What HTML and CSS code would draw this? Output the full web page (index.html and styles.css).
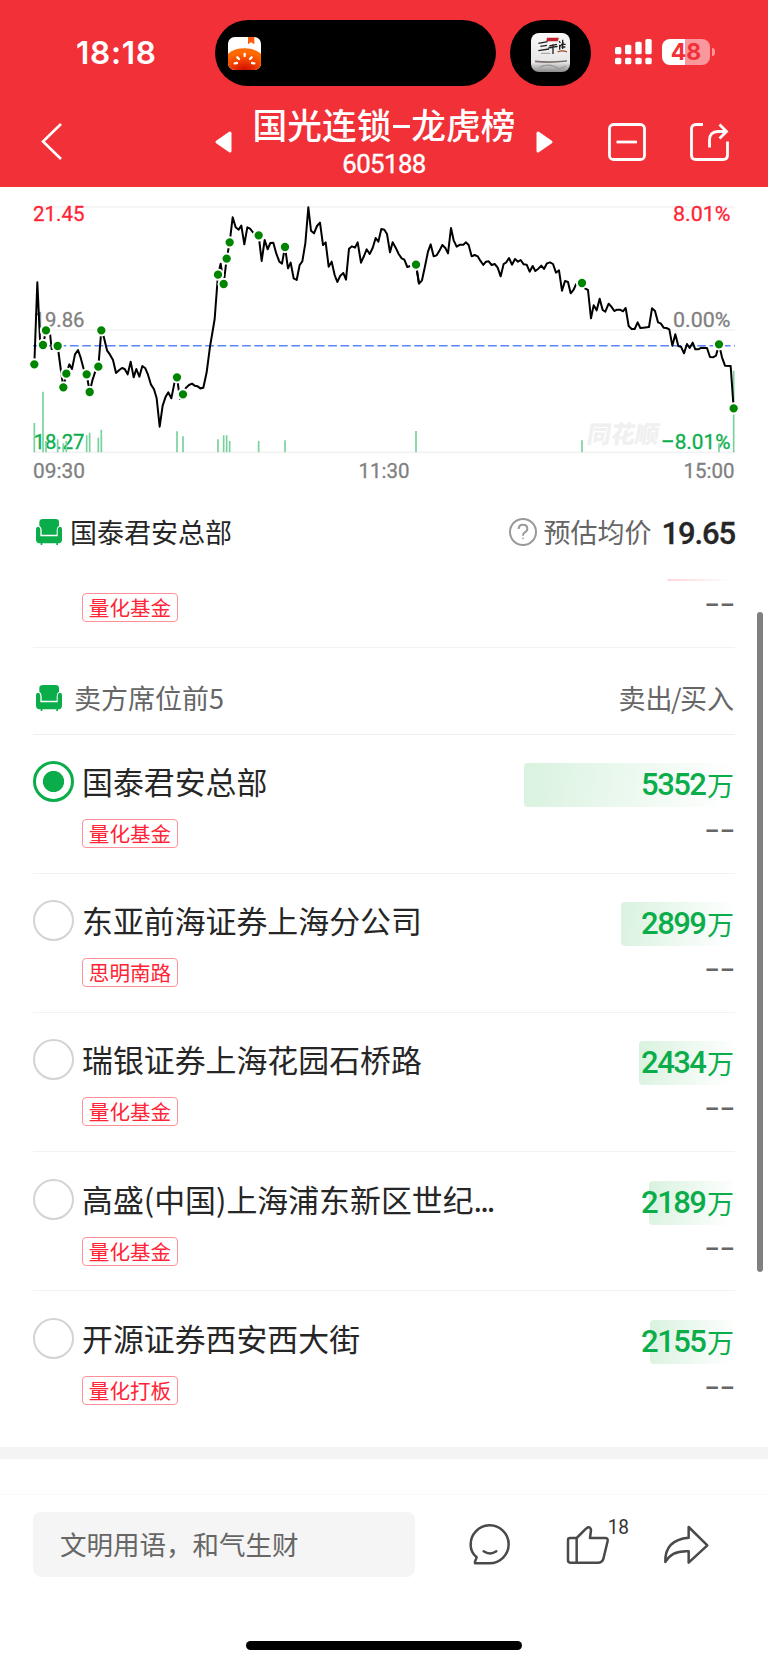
FILE: index.html
```html
<!DOCTYPE html>
<html lang="zh-CN">
<head>
<meta charset="utf-8">
<title>国光连锁-龙虎榜</title>
<link rel="stylesheet" href="styles.css">
</head>
<body>
<svg width="0" height="0" class="defs">
  <symbol id="sofa" viewBox="0 0 78 78">
    <path d="M10 20V10Q10 0 21 0H59Q69 0 69 10V20Q62 24 62 34V47H17V34Q17 24 10 20Z"/>
    <path d="M0 30Q0 23 7 23Q13 24 13 32V52H65V32Q65 24 71 23Q78 23 78 30V62Q78 73 66 73V78H61V73H19V78H14V73Q0 73 0 62Z"/>
  </symbol>
</svg>
<header class="header">
  <div class="status">
    <span class="clock">18:18</span>
    <div class="island">
      <svg class="app" width="33" height="33" viewBox="0 0 99 99">
        <defs><clipPath id="r1"><rect width="99" height="99" rx="20"/></clipPath>
        <radialGradient id="g1" cx=".5" cy="1" r=".8"><stop offset="0" stop-color="#cf0a00"/><stop offset=".5" stop-color="#ee3a00"/><stop offset="1" stop-color="#ff6a00"/></radialGradient></defs>
        <g clip-path="url(#r1)"><rect width="99" height="99" fill="#fff"/><path d="M60 0H79V22L69 16L60 22Z" fill="#ff5d0a"/>
        <path d="M0 50Q20 34 50 34T99 50V99H0Z" fill="url(#g1)"/>
        <g stroke="#fff" stroke-width="7" stroke-linecap="round"><path d="M50 51V57M28 61L33 66M71 61L66 66M20 79L27 78M79 79L72 78"/></g></g>
      </svg>
    </div>
    <div class="bubble">
      <svg width="39" height="39" viewBox="0 0 117 117">
        <defs><clipPath id="r2"><rect width="117" height="117" rx="24"/></clipPath>
        <linearGradient id="g2" x2="0" y2="1"><stop offset="0" stop-color="#fafafa"/><stop offset=".75" stop-color="#e6e6e6"/><stop offset="1" stop-color="#8b8b8b"/></linearGradient></defs>
        <g clip-path="url(#r2)"><rect width="117" height="117" fill="url(#g2)"/>
        <path d="M48 14H84L80 25H46Z" fill="#c3202c"/>
        <g stroke="#222" fill="none"><path d="M22 31L50 26M28 40L48 37M22 53L54 48M55 39L78 34M52 45L80 40M66 34V63M84 24L88 30M87 40L98 28M95 20V48M86 50V35M90 34H104M91 42H103" stroke-width="4"/><path d="M80 57Q94 50 108 57" stroke="#9a4a2b" stroke-width="4"/><path d="M30 61H58" stroke="#999" stroke-width="3"/><path d="M12 85Q55 90 108 84" stroke="#7b706b" stroke-width="5"/><path d="M26 103Q55 88 84 108L106 99" stroke="#999" stroke-width="4"/></g></g>
      </svg>
    </div>
    <svg class="signal" width="37" height="26" viewBox="0 0 111 78" fill="#fff">
      <rect x="0" y="24" width="19" height="22" rx="5"/><rect x="30" y="17" width="19" height="29" rx="5"/><rect x="61" y="8" width="19" height="38" rx="5"/><rect x="91" y="0" width="19" height="46" rx="5"/>
      <rect x="0" y="56" width="19" height="20" rx="5"/><rect x="30" y="56" width="19" height="20" rx="5"/><rect x="61" y="56" width="19" height="20" rx="5"/><rect x="91" y="56" width="19" height="20" rx="5"/>
    </svg>
    <div class="battery">48</div><i class="cap"></i>
  </div>
  <nav class="nav">
    <svg class="back" width="24" height="40" viewBox="0 0 24 40"><path d="M21 3L3 20.500L21 38" fill="none" stroke="#fff" stroke-width="2.600"/></svg>
    <svg class="prev" width="18" height="22" viewBox="0 0 18 22"><path d="M2 11L15 2V20Z" fill="#fff" stroke="#fff" stroke-width="3" stroke-linejoin="round"/></svg>
    <div class="title"><h1>国光连锁<i class="dash"></i>龙虎榜</h1><span>605188</span></div>
    <svg class="next" width="18" height="22" viewBox="0 0 18 22"><path d="M16 11L3 2V20Z" fill="#fff" stroke="#fff" stroke-width="3" stroke-linejoin="round"/></svg>
    <svg class="minus" width="38" height="38" viewBox="0 0 38 38" fill="none" stroke="#fff" stroke-width="2.800"><rect x="1.500" y="1.500" width="35" height="35" rx="4"/><path d="M8.500 19H29"/></svg>
    <svg class="export" width="39" height="38" viewBox="0 0 39 38" fill="none" stroke="#fff" stroke-width="2.800"><path d="M13 1.500H6Q1.500 1.500 1.500 6V32Q1.500 36.500 6 36.500H33Q37.500 36.500 37.500 32V18.500M19.500 24.500V17Q19.500 8.500 28 8.500H36M29.500 1.500L36.500 8.500L29.500 15.500"/></svg>
  </nav>
</header>

<main class="content">
<svg class="chart" width="768" height="305" viewBox="0 187 768 305">
  <g stroke="#f2f2f2" stroke-width="1.700"><path d="M33 207H735M33 330H735M33 452.300H735"/></g>
  <path d="M33 345.700H735" stroke="#5b86fb" stroke-width="1.600" stroke-dasharray="8.700 3.600"/>
  <text class="mark" transform="translate(586 443) skewX(-9)" textLength="72" lengthAdjust="spacingAndGlyphs">同花顺</text>
  <g class="lbl">
    <text class="red" x="33" y="220.700" textLength="51.500" lengthAdjust="spacingAndGlyphs">21.45</text>
    <text x="33.500" y="326.700" textLength="51" lengthAdjust="spacingAndGlyphs">19.86</text>
    <text class="green" x="33.500" y="449.300" textLength="51" lengthAdjust="spacingAndGlyphs">18.27</text>
    <text x="33" y="478.300" textLength="52" lengthAdjust="spacingAndGlyphs">09:30</text>
    <text x="358.500" y="478.300" textLength="51" lengthAdjust="spacingAndGlyphs">11:30</text>
    <text x="683.500" y="478.300" textLength="51" lengthAdjust="spacingAndGlyphs">15:00</text>
    <text class="red" x="673" y="220.700" textLength="57.500" lengthAdjust="spacingAndGlyphs">8.01%</text>
    <text x="673" y="326.700" textLength="57.500" lengthAdjust="spacingAndGlyphs">0.00%</text>
    <text class="green" x="661" y="449.300" textLength="69.500" lengthAdjust="spacingAndGlyphs">–8.01%</text>
  </g>
  <g transform="translate(20 195) scale(.33333)">
    <path class="vol" d="M43 684V772M69 590V772M78 738V772M113 733V772M130 745V772M139 738V772M200 721V772M209 713V772M235 728V772M244 704V772M471 709V772M489 724V772M594 733V772M611 721V772M620 721V772M629 738V772M716 738V772M795 736V772M1188 708V772M1686 736V772M2097 745V772M2141 527V772"/>
    <polyline class="line" points="43,508 52,262 60,434 69,450 78,406 90,415 95,462 113,453 123,528 130,577 139,536 148,508 156,522 165,478 174,465 182,488 191,522 200,538 209,591 218,553 226,529 235,515 244,406 252,428 261,466 270,479 279,495 288,534 297,526 306,519 314,522 323,538 332,500 341,547 349,522 358,545 367,513 376,520 384,539 393,569 402,583 410,610 419,695 428,632 437,605 445,592 454,610 463,565 471,547 480,612 489,598 498,578 507,570 516,566 524,572 533,574 541,580 550,578"/>
    <g transform="translate(540)"><polyline class="line" points="0,581 10,578 20,532 30,455 38,408 44,372 54,239 62,206 71,267 80,191 89,142 98,67 107,97 116,104 124,92 133,148 142,97 150,101 159,112 176,121 185,198 194,135 203,163 211,144 220,143 229,176 238,200 246,206 255,156 264,220 272,203 281,250 290,255 299,210 307,199 316,145 325,37 333,107 342,115 351,93 360,83 369,150 377,142 386,215 395,200 404,240 412,261 421,242 430,234 438,254 447,161 456,154 465,158 473,142 483,203 492,183 500,163 509,177 518,159 527,129 535,140 544,102 553,104 561,117 570,172 578,142 587,158 596,177 605,190 613,194 622,216 631,213 648,209 657,266"/></g>
    <g transform="translate(1140)"><polyline class="line" points="48,209 57,266 66,256 75,214 84,170 92,148 101,184 110,181 119,166 127,150 136,159 144,175 153,99 161,136 170,155 180,149 190,149 198,142 206,150 215,184 224,180 233,184 241,197 250,210 258,200 266,199 275,210 284,207 293,218 302,244 311,207 319,202 327,189 336,209 345,192 354,200 362,195 371,208 380,209 389,230 398,213 406,228 415,221 424,212 432,222 441,205 450,202 459,207 468,233 477,226 486,287 495,258 504,261 512,295 521,284 528,268 546,264"/></g>
    <g transform="translate(1620)"><polyline class="line" points="66,264 76,281 84,285 93,370 101,331 110,346 119,311 128,345 136,350 146,326 154,335 163,348 171,344 180,344 189,349 197,339 206,393 215,402 224,402 233,382 241,399 250,398 267,396 276,340 285,348 294,382 302,385 311,398 319,399 328,403 337,452 346,418 355,453 363,455 372,475 381,447 389,459 398,443 406,463 415,463 424,458 441,459 450,486 459,487 468,482 477,448 486,487 495,512 512,513 521,640"/></g>
    <g class="dots">
      <circle cx="43" cy="508" r="15.500"/><circle cx="69" cy="450" r="15.500"/><circle cx="78" cy="406" r="15.500"/><circle cx="113" cy="453" r="15.500"/><circle cx="130" cy="577" r="15.500"/><circle cx="139" cy="536" r="15.500"/><circle cx="200" cy="538" r="15.500"/><circle cx="209" cy="591" r="15.500"/><circle cx="235" cy="515" r="15.500"/><circle cx="244" cy="406" r="15.500"/><circle cx="471" cy="547" r="15.500"/><circle cx="489" cy="598" r="15.500"/><circle cx="594" cy="239" r="15.500"/><circle cx="611" cy="267" r="15.500"/><circle cx="620" cy="191" r="15.500"/><circle cx="629" cy="142" r="15.500"/><circle cx="716" cy="121" r="15.500"/><circle cx="795" cy="156" r="15.500"/><circle cx="1188" cy="209" r="15.500"/><circle cx="1686" cy="264" r="15.500"/><circle cx="2097" cy="448" r="15.500"/><circle cx="2141" cy="640" r="15.500"/>
    </g>
  </g>
</svg>

<section class="summary">
  <svg class="sofa" width="26" height="26"><use href="#sofa"/></svg>
  <span class="seat">国泰君安总部</span>
  <svg class="help" width="28" height="28" viewBox="0 0 84 84" fill="none" stroke="#999"><circle cx="42" cy="42" r="39" stroke-width="6"/><path d="M29 33Q29 20 42 20Q55 20 55 32Q55 39 47 43Q42 46 42 53" stroke-width="6"/><circle cx="42" cy="61" r="1.500" stroke-width="3"/></svg>
  <span class="est">预估均价</span><b>19.65</b>
</section>

<section class="partial">
  <i class="sliver"></i>
  <div class="sub"><span class="tag">量化基金</span><span class="none">––</span></div>
</section>
<section class="group">
  <svg class="sofa" width="26" height="26"><use href="#sofa"/></svg>
  <h2>卖方席位前5</h2><span>卖出<i class="slash">/</i>买入</span>
</section>
<ul class="list">
  <li><div class="main"><i class="radio on"></i><span class="name">国泰君安总部</span><span class="bar" style="width:210px"><em><b>5352</b>万</em></span></div><div class="sub"><span class="tag">量化基金</span><span class="none">––</span></div></li>
  <li><div class="main"><i class="radio"></i><span class="name">东亚前海证券上海分公司</span><span class="bar" style="width:113px"><em><b>2899</b>万</em></span></div><div class="sub"><span class="tag">思明南路</span><span class="none">––</span></div></li>
  <li><div class="main"><i class="radio"></i><span class="name">瑞银证券上海花园石桥路</span><span class="bar" style="width:95px"><em><b>2434</b>万</em></span></div><div class="sub"><span class="tag">量化基金</span><span class="none">––</span></div></li>
  <li><div class="main"><i class="radio"></i><span class="name">高盛(中国)上海浦东新区世纪<i class="dots3">...</i></span><span class="bar" style="width:85px"><em><b>2189</b>万</em></span></div><div class="sub"><span class="tag">量化基金</span><span class="none">––</span></div></li>
  <li><div class="main"><i class="radio"></i><span class="name">开源证券西安西大街</span><span class="bar" style="width:84px"><em><b>2155</b>万</em></span></div><div class="sub"><span class="tag">量化打板</span><span class="none">––</span></div></li>
</ul>
<i class="scroll"></i>
</main>
<div class="band"></div>
<footer class="footer">
  <div class="input">文明用语，和气生财</div>
  <svg class="tools" width="260" height="75" viewBox="0 0 780 225" fill="none" stroke="#4a4a4a" stroke-width="7.500" stroke-linejoin="round" stroke-linecap="round">
    <path d="M45 175V170L50 157Q32 142 32 120A57 57 0 1 1 89 175Z"/><path d="M71 139Q90 152 109 139"/>
    <path d="M350 99H330Q324 99 324 105V166Q324 173 331 173H414Q426 173 430 162L443 108Q444 99 436 99H390L393 75Q392 66 384 67L378 71L350 99V173"/>
    <path d="M686 66L742 121L686 173V139Q635 136 616 171Q614 104 686 98Z"/>
    <text x="443" y="87" textLength="64" lengthAdjust="spacingAndGlyphs">18</text>
  </svg>
</footer>
<div class="home"></div>
</body>
</html>
```
FILE: styles.css
```css
* { box-sizing: border-box; margin: 0; padding: 0; }
body { width: 768px; height: 1665px; background: #fff; color: #262626; font-family: "Noto Sans CJK SC", sans-serif; overflow: hidden; }
svg { display: block; flex: none; }
i, em { font-style: normal; }
.defs { position: absolute; }
.header { height: 187px; background: #f23038; color: #fff; }
.status { height: 103px; padding-top: 20px; display: flex; align-items: flex-start; }
.clock { width: 139px; margin: 14px 0 0 76px; font: 600 31.500px/38px Inter, sans-serif; letter-spacing: .7px; }
.island { width: 281px; height: 66px; border-radius: 33px; background: #000; padding: 17px 12.500px; }
.bubble { width: 81px; height: 66px; margin-left: 14px; border-radius: 33px; background: #000; padding: 13px 21px; }
.signal { margin: 19px 0 0 24px; }
.battery { width: 48px; height: 26px; margin: 19px 0 0 10px; border-radius: 8px; background: linear-gradient(90deg, #fff 48%, #f8989c 48%); color: #f23038; font: 700 23px/27px Inter, sans-serif; text-align: center; }
.cap { width: 3px; height: 8px; margin: 28px 0 0 2px; border-radius: 0 4px 4px 0; background: #f8989c; }
.nav { height: 84px; display: flex; align-items: flex-start; }
.back { margin: 18px 0 0 40px; }
.prev { margin: 28px 0 0 151px; }
.title { width: 302px; display: flex; flex-direction: column; align-items: center; }
.title h1 { height: 46px; margin-top: -2px; font-size: 34.700px; line-height: 46px; font-weight: 500; display: flex; align-items: center; }
.title .dash { width: 17px; height: 3px; margin: 5px 1.500px 0; background: #fff; }
.title span { margin-top: 2px; font: 400 25.800px/30px Roboto, sans-serif; letter-spacing: -.6px; -webkit-text-stroke: .4px #fff; }
.next { margin: 28px 0 0; }
.minus { margin: 20px 0 0 55px; }
.export { margin: 20px 0 0 43.500px; }
.content { height: 1260px; position: relative; }
.chart text { font-family: Roboto, sans-serif; font-size: 21px; fill: #808080; stroke: #808080; stroke-width: .3px; }
.chart .red { fill: #ff2436; stroke: #ff2436; }
.chart .green { fill: #0bad4b; stroke: #0bad4b; }
.chart .mark { font: 900 24px "Noto Sans CJK SC", sans-serif; fill: #f0f0f0; stroke: none; }
.vol { stroke: #78d29c; stroke-width: 5; }
.line { fill: none; stroke: #000; stroke-width: 6; stroke-linejoin: round; }
.dots { fill: #008500; stroke: #fff; stroke-width: 6; }
.summary { height: 84px; padding: 0 34px 5px 36px; display: flex; align-items: center; }
.sofa { fill: #0bad4b; }
.seat { margin-left: 8px; font-size: 27px; }
.summary .sofa { margin-top: 1px; }
.help { margin: 1px 6px 0 auto; }
.est { font-size: 27px; color: #666; }
.summary b { margin: 5px 0 0 10px; font: 500 31px/36px Roboto, sans-serif; letter-spacing: -1.100px; -webkit-text-stroke: .3px #262626; margin-right: -1px; }
.partial { height: 71.500px; margin: 0 33px; border-bottom: 1px solid #f2f2f2; display: flex; flex-direction: column; padding-top: 3px; }
.sliver { width: 66px; height: 2px; margin: 0 2px 0 auto; background: linear-gradient(90deg, #ffd6da, #fff); border-radius: 0 0 0 2px; }
.partial .sub { margin-top: 12px; }
.sub { display: flex; align-items: flex-start; justify-content: space-between; padding-left: 49px; }
.tag { width: 96px; height: 29px; border: 1px solid #ff8f99; border-radius: 4px; color: #ff2436; font-size: 20.600px; line-height: 26px; text-align: center; }
.none { color: #666; font: 700 23px/20px "Liberation Sans", sans-serif; letter-spacing: 2.300px; margin-right: -1px; }
.group { height: 87.300px; margin: 0 33px; padding: 14px 1px 0 3px; border-bottom: 1.500px solid #f0f0f0; display: flex; align-items: center; color: #666; }
.group h2 { margin-left: 12px; font-size: 27px; font-weight: 400; flex: 1; }
.group span { font-size: 27px; }
.slash { margin: 0 -1.500px; }
.list { list-style: none; margin: 0 33px; }
.list li { height: 139.100px; padding-top: 26.500px; border-bottom: 1px solid #f2f2f2; }
.list li:last-child { border: 0; }
.main { height: 46px; display: flex; align-items: flex-start; }
.radio { width: 41px; height: 41px; border: 2.500px solid #d3d3d3; border-radius: 50%; flex: none; }
.radio.on { border: 3px solid #0bad4b; background: radial-gradient(circle, #0bad4b 10.200px, #fff 11px); }
.name { margin-left: 8px; flex: 1; font-size: 30.900px; line-height: 40px; white-space: nowrap; }
.dots3 { letter-spacing: -2px; }
.bar { height: 44px; margin: 2px 1px 0 0; border-radius: 4px; background: linear-gradient(100deg, #d9f2df, #fff 98%); display: flex; justify-content: flex-end; color: #0bad4b; }
.bar em { display: flex; align-items: center; font-size: 27px; line-height: 46px; flex: none; }
.bar b { font: 500 31px/46px Roboto, sans-serif; letter-spacing: -1.500px; margin-right: 1.500px; }
.list .sub { padding-top: 12px; }
.scroll { position: absolute; right: 5px; top: 425px; width: 6px; height: 660px; border-radius: 3px; background: #808080; }
.band { height: 12px; background: #f4f4f4; }
.footer { height: 118px; margin-top: 35px; border-top: 1px solid #f9f9f9; padding: 17px 0 0 33px; display: flex; align-items: flex-start; }
.input { width: 382px; height: 65px; border-radius: 8px; background: #f5f5f5; padding-left: 27px; color: #666; font-size: 26.500px; line-height: 64px; }
.tools { margin: -7px 0 0 45px; }
.tools text { font: 60px Roboto, sans-serif; fill: #333; stroke: none; }
.home { width: 276px; height: 9px; margin: 29px auto 0; border-radius: 5px; background: #000; }
```
